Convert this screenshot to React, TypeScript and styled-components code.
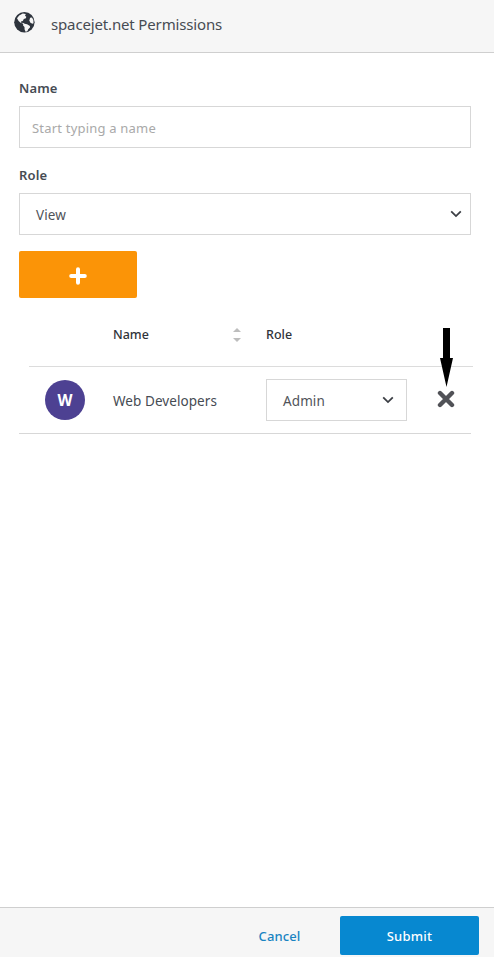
import React from 'react';
import styled, { createGlobalStyle } from 'styled-components';

const GlobalStyle = createGlobalStyle`
  *, *::before, *::after { box-sizing: border-box; }
  body { margin: 0; background: #fff; color: #464b53; font-family: 'Noto Sans', 'Open Sans', sans-serif; font-size: 14px; }
  button, input { font: inherit; letter-spacing: inherit; }
`;

const Panel = styled.div`
  height: 957px;
  display: flex;
  flex-direction: column;
  overflow: hidden;
`;

const Header = styled.header`
  height: 53px;
  flex: none;
  display: flex;
  align-items: flex-start;
  gap: 16px;
  padding: 12px 14px 0;
  background: #f6f6f6;
  border-bottom: 1px solid #cfcfcf;
  svg { display: block; }
`;

const Title = styled.h1`
  margin: 2px 0 0;
  font-size: 15px;
  line-height: 20px;
  font-weight: 400;
  letter-spacing: -0.15px;
`;

const Content = styled.main`
  flex: 1;
  padding: 26px 23px 0 19px;
`;

const Label = styled.label<{ $spaced?: boolean }>`
  display: block;
  height: 18px;
  margin: ${p => (p.$spaced ? '18px' : '0')} 0 9px;
  font-size: 13px;
  line-height: 18px;
  font-weight: 600;
  letter-spacing: 0.15px;
`;

const TextInput = styled.input`
  display: block;
  width: 100%;
  height: 42px;
  padding: 1px 12px 0;
  border: 1px solid #d7d7d7;
  border-radius: 0;
  background: #fff;
  font-size: 13px;
  letter-spacing: 0.2px;
  outline: 0;
  &::placeholder { color: #a9a9a9; opacity: 1; }
`;

const SelectButton = styled.button<{ $width: string; $inset: number }>`
  display: flex;
  width: ${p => p.$width};
  height: 42px;
  align-items: center;
  justify-content: space-between;
  padding: 1px ${p => p.$inset}px 0 16px;
  border: 1px solid #d7d7d7;
  background: #fff;
  color: #505359;
  font-size: 13.5px;
  letter-spacing: 0.1px;
  svg { display: block; margin-top: -2px; }
`;

const AddButton = styled.button`
  display: flex;
  width: 118px;
  height: 47px;
  margin-top: 16px;
  align-items: center;
  justify-content: center;
  padding: 3px 0 0;
  border: 0;
  border-radius: 2px;
  background: #fb9407;
  svg { display: block; }
`;

const TableHead = styled.div`
  display: grid;
  grid-template-columns: 84px 119px 34px 1fr;
  height: 69px;
  margin: 0 -2px 0 10px;
  padding-top: 28px;
  border-bottom: 1px solid #dcdcdc;
  color: #30343a;
  font-size: 12.5px;
  line-height: 18px;
  font-weight: 500;
  svg { display: block; margin-top: 1px; }
`;

const TableRow = styled.div`
  display: grid;
  grid-template-columns: 94px 153px 141px 1fr;
  height: 67px;
  align-items: center;
  border-bottom: 1px solid #d7d7d7;
`;

const Avatar = styled.div`
  width: 40px;
  height: 40px;
  margin-left: 26px;
  border-radius: 50%;
  background: #4d4192;
  color: #fff;
  font-size: 15.5px;
  line-height: 40px;
  font-weight: 700;
  text-align: center;
`;

const RowName = styled.span`
  padding-top: 2px;
  font-size: 13.5px;
  line-height: 20px;
  letter-spacing: 0.07px;
`;

const RemoveButton = styled.button`
  position: relative;
  width: 18px;
  height: 18px;
  margin-left: 30px;
  margin-top: -2px;
  padding: 0;
  border: 0;
  background: none;
  svg { display: block; }
`;

const Pointer = styled.span`
  position: absolute;
  left: 3px;
  bottom: 21px;
`;

const Footer = styled.footer`
  height: 50px;
  flex: none;
  display: flex;
  align-items: flex-start;
  justify-content: flex-end;
  gap: 39px;
  padding: 8px 15px 0;
  background: #f6f6f6;
  border-top: 1px solid #cfcfcf;
`;

const Action = styled.button<{ $primary?: boolean }>`
  width: ${p => (p.$primary ? '139px' : '43px')};
  height: 39px;
  padding: 1px 0 0;
  border: 0;
  border-radius: 2px;
  background: ${p => (p.$primary ? '#0788d0' : 'transparent')};
  color: ${p => (p.$primary ? '#fff' : '#1984c2')};
  font-size: 13px;
  font-weight: 500;
  letter-spacing: ${p => (p.$primary ? '0.25px' : '0.1px')};
`;

const Globe = () => (
  <svg width="21" height="21" viewBox="0 0 21 21">
    <circle cx="10.4" cy="10.3" r="10.2" fill="#2e343d" />
    <g fill="#f6f6f6">
      <path d="M3 6.2 5.2 3.6l3.6-2 3 .4-.8 1.8 1.3 1-.4 1.5-2.1.7-1 2-1.8.6.1 1.2 2.5.1 1 .9 2.5.5 2.8 1.6.1 1.6-1.8 1.7-.8 2-1.8.5-1-2.3-.1-2.3-1.4-1.6.1-1.8-2.6-.9-2-1.9Z" />
      <path d="m16.1 5.7 1.9-.2 1.4 2.6.1 3.1-1.2.6-2.1-1.2-.8-2Z" />
    </g>
  </svg>
);

const Chevron = () => (
  <svg width="12" height="8" viewBox="0 0 12 8" fill="none" stroke="#3b3e44" strokeWidth="1.8">
    <path d="M1.2 1.4 6 6.1l4.8-4.7" />
  </svg>
);

export default function App() {
  return (
    <>
      <GlobalStyle />
      <Panel>
        <Header>
          <Globe />
          <Title>spacejet.net Permissions</Title>
        </Header>
        <Content>
          <Label htmlFor="name">Name</Label>
          <TextInput id="name" placeholder="Start typing a name" />
          <Label htmlFor="role" $spaced>Role</Label>
          <SelectButton id="role" $width="100%" $inset={8}>View<Chevron /></SelectButton>
          <AddButton aria-label="Add">
            <svg width="18" height="18" viewBox="0 0 18 18" stroke="#fff" strokeWidth="4" strokeLinecap="round">
              <path d="M9 2.2v13.6M2.2 9h13.6" />
            </svg>
          </AddButton>
          <TableHead>
            <span />
            <span>Name</span>
            <svg width="10" height="16" viewBox="0 0 10 16" fill="#bdbdbd">
              <path d="M1 5 5 1l4 4ZM1 11l4 4 4-4Z" />
            </svg>
            <span>Role</span>
          </TableHead>
          <TableRow>
            <Avatar>W</Avatar>
            <RowName>Web Developers</RowName>
            <SelectButton $width="141px" $inset={12}>Admin<Chevron /></SelectButton>
            <RemoveButton aria-label="Remove">
              <svg width="18" height="18" viewBox="0 0 18 18" stroke="#515257" strokeWidth="4.4" strokeLinecap="round">
                <path d="m3 3 12 12M15 3 3 15" />
              </svg>
              <Pointer>
                <svg width="13" height="59" viewBox="0 0 13 59" fill="#000">
                  <path d="M3 0h7v30h3L6.5 59 0 30h3Z" />
                </svg>
              </Pointer>
            </RemoveButton>
          </TableRow>
        </Content>
        <Footer>
          <Action>Cancel</Action>
          <Action $primary>Submit</Action>
        </Footer>
      </Panel>
    </>
  );
}
